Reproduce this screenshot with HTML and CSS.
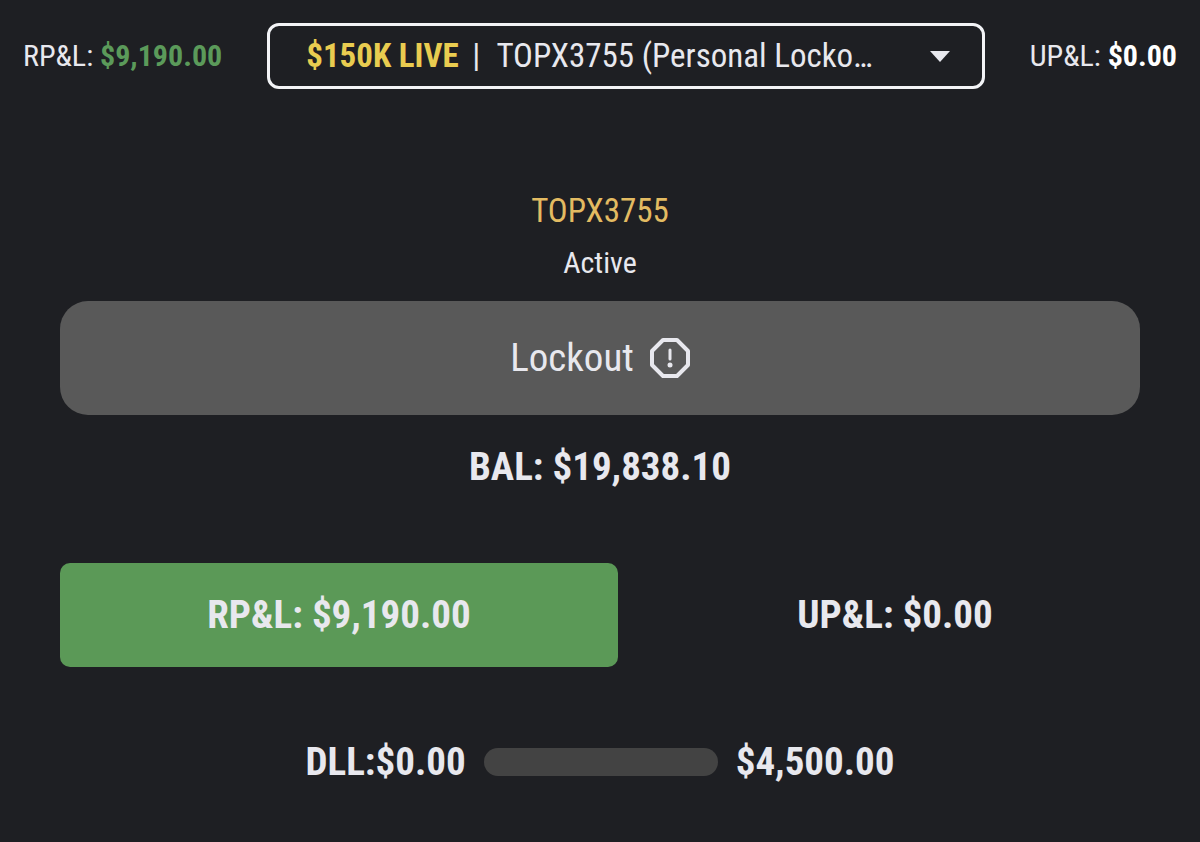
FILE: index.html
```html
<!DOCTYPE html>
<html lang="en">
<head>
    <meta charset="UTF-8">
    <meta name="viewport" content="width=device-width, initial-scale=1.0">
    <title>TOPX3755</title>
    <link rel="stylesheet" href="styles.css">
</head>
<body>
    <header class="topbar">
        <div class="pnl">RP&amp;L: <strong class="profit">$9,190.00</strong></div>
        <div class="account-picker">
            <label for="account"><strong>$150K LIVE</strong> |</label>
            <select id="account">
                <option>TOPX3755 (Personal Lockout)</option>
            </select>
            <svg class="arrow" viewBox="0 0 20 11" aria-hidden="true"><path d="M0 0h20L10 11z"/></svg>
        </div>
        <div class="pnl">UP&amp;L: <strong>$0.00</strong></div>
    </header>

    <main class="account">
        <h1 class="account-name">TOPX3755</h1>
        <p class="status">Active</p>

        <button class="lockout" type="button">
            Lockout
            <svg viewBox="0 0 40 40" aria-hidden="true">
                <path class="ring" d="M13 2h14l11 11v14L27 38H13L2 27V13z"/>
                <path class="mark" d="M20 12v9"/>
                <circle cx="20" cy="27" r="2.5"/>
            </svg>
        </button>

        <p class="balance">BAL: $19,838.10</p>

        <div class="totals">
            <div class="total positive">RP&amp;L: $9,190.00</div>
            <div class="total">UP&amp;L: $0.00</div>
        </div>

        <div class="loss-limit">
            <span>DLL:$0.00</span>
            <div class="bar" role="progressbar" aria-label="DLL" aria-valuemin="0" aria-valuemax="4500" aria-valuenow="0"></div>
            <span>$4,500.00</span>
        </div>
    </main>
</body>
</html>
```

FILE: styles.css
```css
* {
    box-sizing: border-box;
}

body {
    background-color: #1e1f23;
    color: #e8e8ee;
    font-family: "Roboto Condensed", "Liberation Sans Narrow", Roboto, sans-serif;
    font-size: 39px;
    line-height: 48px;
    margin: 0;
}

h1, p {
    margin: 0;
    text-align: center;
}

.topbar {
    display: flex;
    align-items: center;
    gap: 45px;
    padding: 23px 23px 22px;
}

.pnl {
    font-size: 30px;
    white-space: nowrap;
}

.pnl strong {
    color: #ffffff;
}

.pnl .profit {
    color: #5b9a5a;
}

.account-picker {
    position: relative;
    flex: 1;
    min-width: 0;
    display: flex;
    align-items: center;
    gap: 16px;
    height: 66px;
    padding-left: 36px;
    border: 3px solid #f2f3f6;
    border-radius: 12px;
    font-size: 33px;
}

.account-picker label {
    white-space: nowrap;
}

.account-picker strong {
    color: #e9cc50;
    margin-right: 6px;
}

.account-picker select {
    flex: 1;
    min-width: 0;
    height: 100%;
    padding: 0 98px 0 0;
    border: none;
    background: transparent;
    color: inherit;
    font: inherit;
    appearance: none;
    text-overflow: ellipsis;
}

.arrow {
    position: absolute;
    right: 32px;
    width: 20px;
    fill: #e8e8ee;
    pointer-events: none;
}

.account {
    padding: 76px 60px 56px;
}

.account-name {
    color: #e3bb62;
    font-size: 33px;
    font-weight: 400;
}

.status {
    font-size: 30px;
    margin: 4px 0 14px;
}

.lockout {
    display: flex;
    justify-content: center;
    align-items: center;
    gap: 16px;
    width: 100%;
    padding: 33px;
    border: none;
    border-radius: 28px;
    background-color: #595959;
    color: inherit;
    font: inherit;
    cursor: pointer;
}

.lockout svg {
    width: 40px;
    height: 40px;
    fill: #e8e8ee;
}

.lockout .ring {
    fill: none;
    stroke: #e8e8ee;
    stroke-width: 4;
    stroke-linejoin: round;
}

.lockout .mark {
    stroke: #e8e8ee;
    stroke-width: 3;
    stroke-linecap: round;
}

.balance {
    margin: 28px 0 72px;
    font-weight: 700;
}

.totals {
    display: grid;
    grid-template-columns: 558fr 490fr;
    gap: 32px;
    font-weight: 700;
    text-align: center;
}

.total {
    padding: 28px 0;
    border-radius: 10px;
}

.positive {
    background-color: #5b9957;
}

.loss-limit {
    display: flex;
    justify-content: center;
    align-items: center;
    gap: 18px;
    margin-top: 71px;
    font-weight: 700;
}

.bar {
    width: 234px;
    height: 28px;
    border-radius: 14px;
    background-color: #434343;
}
```
